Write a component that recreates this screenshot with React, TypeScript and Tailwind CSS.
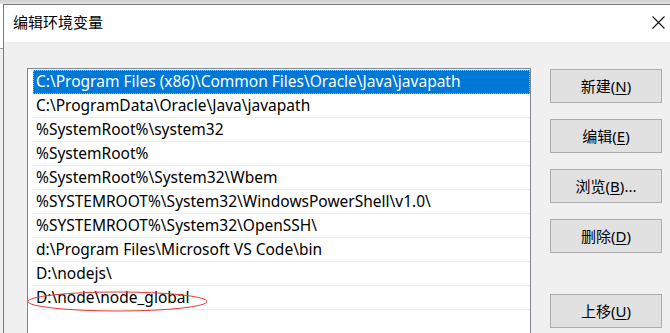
import React from 'react';

const paths = [
  'C:\\Program Files (x86)\\Common Files\\Oracle\\Java\\javapath',
  'C:\\ProgramData\\Oracle\\Java\\javapath',
  '%SystemRoot%\\system32',
  '%SystemRoot%',
  '%SystemRoot%\\System32\\Wbem',
  '%SYSTEMROOT%\\System32\\WindowsPowerShell\\v1.0\\',
  '%SYSTEMROOT%\\System32\\OpenSSH\\',
  'd:\\Program Files\\Microsoft VS Code\\bin',
  'D:\\nodejs\\',
  'D:\\node\\node_global',
];

const font = { fontFamily: '"Noto Sans", "Noto Sans CJK SC", sans-serif' };

const WinButton = ({ label, hotkey, tail }: { label: string; hotkey: string; tail?: string }) => (
  <div className="h-[34px] w-[112px] border border-[#adadad] bg-[#e1e1e1] flex items-center justify-center text-[15px] text-black">
    <span>
      {label}(<span className="underline underline-offset-2">{hotkey}</span>){tail}
    </span>
  </div>
);

const App = () => {
  return (
    <div className="w-[670px] h-[333px] overflow-hidden relative bg-[#dadada] flex flex-col" style={font}>
      {/* strip of desktop above the window */}
      <div className="h-[4px] bg-gradient-to-b from-[#cfcfcf] to-[#e2e2e2] shrink-0" />

      <div className="flex flex-1 min-h-0">
        {/* edge of window behind */}
        <div className="w-[3px] shrink-0 flex flex-col">
          <div className="h-[44px] bg-white" />
          <div className="h-px bg-[#9a9a9a]" />
          <div className="flex-1 bg-[#f0f0f0]" />
        </div>

        {/* dialog */}
        <div className="flex-1 flex flex-col border-t border-l border-[#7a7a7a] min-w-0">
          {/* title bar */}
          <div className="h-[37px] bg-white flex items-center justify-between pl-[9px] pr-[5px] shrink-0">
            <span className="text-[15px] text-black pb-[2px]">编辑环境变量</span>
            <svg width="13" height="13" viewBox="0 0 13 13" className="mb-[2px]">
              <path d="M0.5 0.5 L12.5 12.5 M12.5 0.5 L0.5 12.5" stroke="#111" strokeWidth="1.1" fill="none" />
            </svg>
          </div>

          {/* body */}
          <div className="flex-1 bg-[#f0f0f0] flex pt-[26px] pl-[23px] gap-[19px] min-h-0">
            {/* list */}
            <div className="w-[504px] h-[300px] shrink-0 border border-[#828790] bg-white pl-[5px] pt-px">
              {paths.map((p, i) => (
                <div
                  key={p}
                  className={
                    i === 0
                      ? 'h-[24px] bg-[#0078d7] text-white border border-dotted border-[#ff9a3c] pl-[2px] flex items-center text-[15.5px]'
                      : 'h-[24px] border-b border-[#ececec] pl-[3px] flex items-center text-[15.5px] text-black'
                  }
                >
                  <span className="whitespace-nowrap">{p}</span>
                </div>
              ))}
            </div>

            {/* buttons */}
            <div className="flex flex-col gap-[16px] pt-px">
              <WinButton label="新建" hotkey="N" />
              <WinButton label="编辑" hotkey="E" />
              <WinButton label="浏览" hotkey="B" tail="..." />
              <WinButton label="删除" hotkey="D" />
              <div className="h-[9px]" />
              <WinButton label="上移" hotkey="U" />
            </div>
          </div>
        </div>
      </div>

      {/* red annotation ellipse */}
      <svg className="absolute left-0 top-0 pointer-events-none" width="670" height="333">
        <ellipse cx="117.5" cy="301.5" rx="89.5" ry="9.5" fill="none" stroke="#e53935" strokeWidth="1" />
      </svg>
    </div>
  );
};

export default App;
